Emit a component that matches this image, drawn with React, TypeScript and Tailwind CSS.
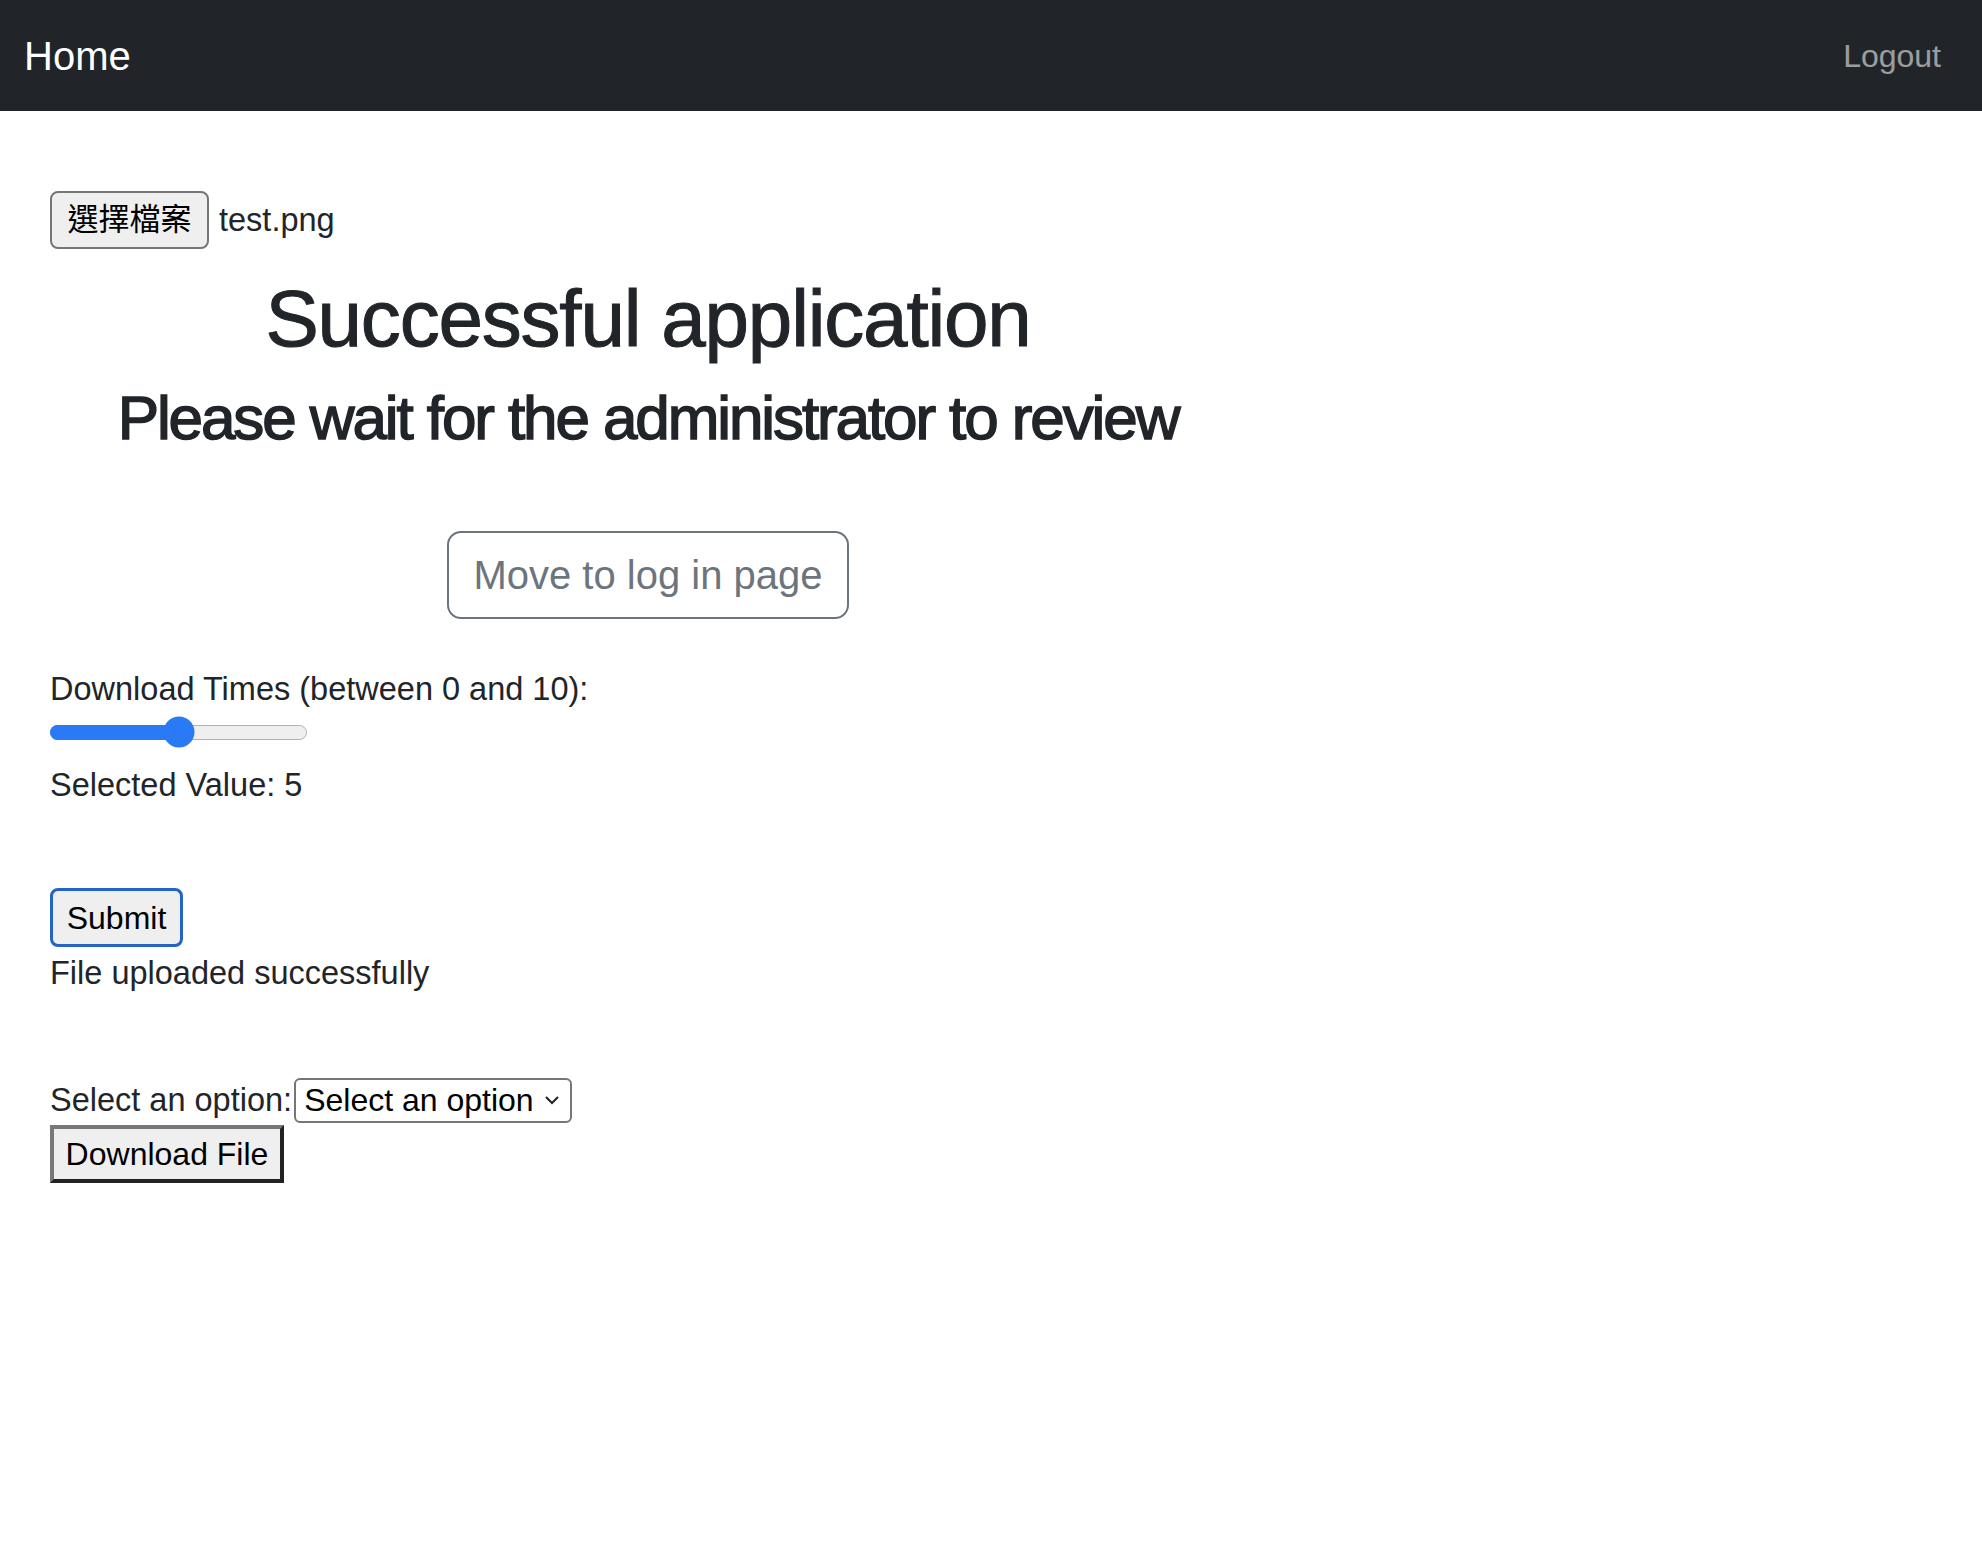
import React from "react";

const sans = "font-['Liberation_Sans','Noto_Sans_CJK_TC',sans-serif]";

function Navbar() {
  return (
    <nav className="h-[111px] bg-[#212529] flex items-center justify-between pl-[24px] pr-[41px]">
      <a className="text-[40px] leading-[60px] text-white">Home</a>
      <a className="text-[32px] leading-[48px] text-white/55">Logout</a>
    </nav>
  );
}

function RangeSlider({ value, max }: { value: number; max: number }) {
  const pct = (value / max) * 100;
  return (
    <div className="mt-[3px] h-[32px] w-[257px] flex items-center">
      <div className="relative w-full h-[15px] rounded-full bg-[#efefef] border border-[#b2b2b2]">
        <div
          className="absolute left-[-1px] top-[-1px] bottom-[-1px] rounded-full bg-[#2a7af5]"
          style={{ width: `${pct}%` }}
        />
        <div
          className="absolute top-1/2 -translate-y-1/2 -translate-x-1/2 w-[31px] h-[31px] rounded-full bg-[#2a7af5]"
          style={{ left: `${pct}%` }}
        />
      </div>
    </div>
  );
}

export default function App() {
  return (
    <div className={`min-h-[1566px] bg-white text-[#212529] ${sans}`}>
      <Navbar />
      <main className="pl-[50px]">
        <div className="mt-[80px] flex items-center">
          <button className="w-[159px] h-[58px] border-2 border-[#767676] rounded-[8px] bg-[#efefef] text-[31px] text-black">
            選擇檔案
          </button>
          <span className="ml-[10px] text-[32.5px] leading-[48px]">test.png</span>
        </div>

        <div className="w-[1196px] text-center">
          <h1 className="mt-[22px] text-[80px] leading-[96px] tracking-[-1.2px] [-webkit-text-stroke:1px_#212529]">
            Successful application
          </h1>
          <h2 className="mt-[13px] text-[62px] leading-[76px] font-normal tracking-[-2.1px] [-webkit-text-stroke:1.5px_#212529]">
            Please wait for the administrator to review
          </h2>
          <div className="mt-[75px] flex justify-center">
            <button className="w-[402px] h-[88px] border-2 border-[#6c757d] rounded-[14px] text-[40px] text-[#6c757d]">
              Move to log in page
            </button>
          </div>
        </div>

        <div className="mt-[46px] text-[32.5px] leading-[48px]">Download Times (between 0 and 10):</div>
        <RangeSlider value={5} max={10} />
        <div className="mt-[13px] text-[32.5px] leading-[48px]">Selected Value: 5</div>

        <button className="mt-[79px] w-[133px] h-[59px] border-[3px] border-[#2563c9] rounded-[8px] bg-[#efefef] text-[32px] text-black">
          Submit
        </button>
        <div className="mt-[2px] text-[32.5px] leading-[48px]">File uploaded successfully</div>

        <div className="mt-[80px] flex items-center h-[46px]">
          <label className="text-[32.5px] leading-[48px]">Select an option:</label>
          <div className="ml-[2px] w-[278px] h-[45px] border-2 border-[#767676] rounded-[6px] flex items-center justify-between pl-[8px] pr-[10px] text-[32px] text-black">
            <span>Select an option</span>
            <svg width="16" height="10" viewBox="0 0 16 10" fill="none" stroke="#222" strokeWidth="2">
              <path d="M2 2l6 6 6-6" />
            </svg>
          </div>
        </div>
        <button className="mt-[2px] w-[234px] h-[58px] border-[4px] border-t-[#787878] border-l-[#787878] border-b-[#222] border-r-[#222] bg-[#efefef] text-[32px] text-black">
          Download File
        </button>
      </main>
    </div>
  );
}
